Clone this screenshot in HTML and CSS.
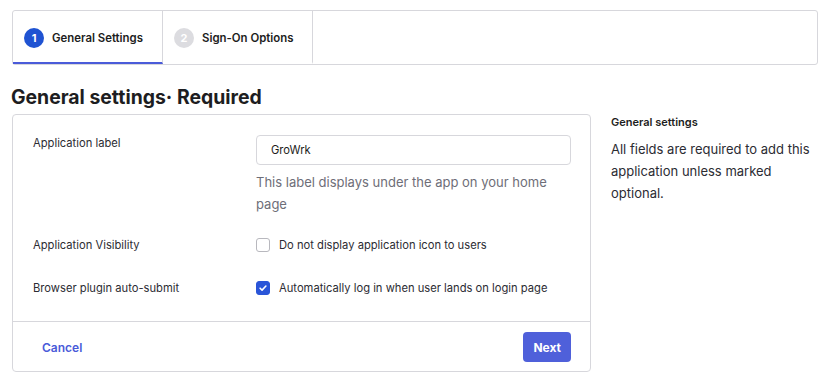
FILE: index.html
```html
<!DOCTYPE html>
<html lang="en">
<head>
  <meta charset="UTF-8">
  <title>Add Application - General Settings</title>
  <link rel="stylesheet" href="styles.css">
</head>
<body>
  <nav class="wizard-tabs">
    <div class="wizard-tab active">
      <span class="step-num">1</span>
      <span>General Settings</span>
    </div>
    <div class="wizard-tab">
      <span class="step-num">2</span>
      <span>Sign-On Options</span>
    </div>
  </nav>

  <h1 class="page-title">General settings· Required</h1>

  <div class="content">
    <form class="settings-card">
      <div class="card-body">
        <div class="form-row">
          <label for="app-label" class="form-label label-input">Application label</label>
          <div class="form-field">
            <input type="text" id="app-label" class="text-input" value="GroWrk">
            <p class="help-text">This label displays under the app on your home page</p>
          </div>
        </div>

        <div class="form-row">
          <span class="form-label">Application Visibility</span>
          <label class="form-field check-row">
            <span class="checkbox"></span>
            <span>Do not display application icon to users</span>
          </label>
        </div>

        <div class="form-row">
          <span class="form-label">Browser plugin auto-submit</span>
          <label class="form-field check-row">
            <span class="checkbox checked">
              <svg viewBox="0 0 14 14" width="14" height="14"><path d="M3.6 7.2l2.3 2.3 4.5-4.8" fill="none" stroke="#fff" stroke-width="1.8" stroke-linecap="round" stroke-linejoin="round"/></svg>
            </span>
            <span>Automatically log in when user lands on login page</span>
          </label>
        </div>
      </div>

      <div class="card-footer">
        <a href="#" class="btn-link">Cancel</a>
        <button type="button" class="btn-primary">Next</button>
      </div>
    </form>

    <aside class="side-info">
      <h2 class="side-title">General settings</h2>
      <p class="side-text">All fields are required to add this application unless marked optional.</p>
    </aside>
  </div>
</body>
</html>
```

FILE: styles.css
```css
:root {
  --primary-color: #4a5bd9;
  --check-blue: #2a55d8;
  --text: #1d1d21;
  --muted: #6e6e78;
  --border: #d7d7dc;
}

* {
  margin: 0;
  padding: 0;
  box-sizing: border-box;
  font-family: 'Inter', 'Noto Sans', Arial, sans-serif;
}

body {
  background-color: #ffffff;
  color: var(--text);
  padding: 10px 10px 0 12px;
}

.wizard-tabs {
  display: flex;
  height: 55px;
  border: 1px solid var(--border);
  border-radius: 3px;
}

.wizard-tab {
  display: flex;
  align-items: center;
  gap: 8px;
  width: 150px;
  padding-left: 11px;
  border-right: 1px solid var(--border);
  font-size: 11.4px;
  font-weight: 600;
  color: var(--text);
  border-bottom: 2px solid transparent;
  padding-top: 2px;
}

.wizard-tab.active {
  border-bottom-color: var(--primary-color);
}

.step-num {
  display: flex;
  align-items: center;
  justify-content: center;
  width: 20px;
  height: 20px;
  border-radius: 50%;
  background-color: #dcdce0;
  color: #fff;
  font-size: 11px;
  font-weight: 700;
}

.wizard-tab.active .step-num {
  background-color: #1f53d2;
}

.page-title {
  font-size: 19.4px;
  font-weight: 700;
  margin: 20px 0 5px -1px;
  line-height: 24px;
  color: #1d1d21;
}

.content {
  display: flex;
  align-items: flex-start;
  gap: 20px;
}

.settings-card {
  width: 579px;
  border: 1px solid var(--border);
  border-radius: 4px;
}

.card-body {
  padding: 20px 19px 22px 20px;
}

.form-row {
  display: flex;
  align-items: center;
  margin-bottom: 21px;
}

.form-row:first-child {
  align-items: flex-start;
  margin-bottom: 19px;
}

.form-row:last-child {
  margin-bottom: 0;
}

.form-label {
  width: 223px;
  font-size: 11.2px;
  color: #2c2c33;
}

.label-input {
  padding-top: 1px;
}

.form-field {
  flex: 1;
}

.text-input {
  width: 100%;
  height: 30px;
  padding: 0 14px;
  border: 1px solid var(--border);
  border-radius: 4px;
  font-size: 11.2px;
  color: var(--text);
}

.help-text {
  margin-top: 6px;
  font-size: 13px;
  line-height: 22px;
  color: var(--muted);
  padding-right: 20px;
}

.check-row {
  display: flex;
  align-items: center;
  gap: 9px;
  font-size: 11.2px;
  color: #2c2c33;
  height: 22px;
}

.checkbox {
  display: flex;
  align-items: center;
  justify-content: center;
  width: 14px;
  height: 14px;
  border: 1px solid #b8b8be;
  border-radius: 3px;
}

.checkbox.checked {
  background-color: var(--check-blue);
  border-color: var(--check-blue);
}

.card-footer {
  display: flex;
  justify-content: space-between;
  align-items: center;
  border-top: 1px solid var(--border);
  padding: 10px 19px 9px 29px;
}

.btn-link {
  color: var(--primary-color);
  font-size: 12px;
  font-weight: 600;
  text-decoration: none;
}

.btn-primary {
  height: 30px;
  padding: 0 10px;
  background-color: #4f60da;
  color: #fff;
  border: none;
  border-radius: 4px;
  font-size: 12px;
  font-weight: 700;
  cursor: pointer;
}

.side-info {
  width: 200px;
  padding-top: 1px;
}

.side-title {
  font-size: 11px;
  font-weight: 600;
  line-height: 14px;
  margin-bottom: 9px;
}

.side-text {
  font-size: 13px;
  line-height: 22px;
  color: #2c2c33;
}
```
